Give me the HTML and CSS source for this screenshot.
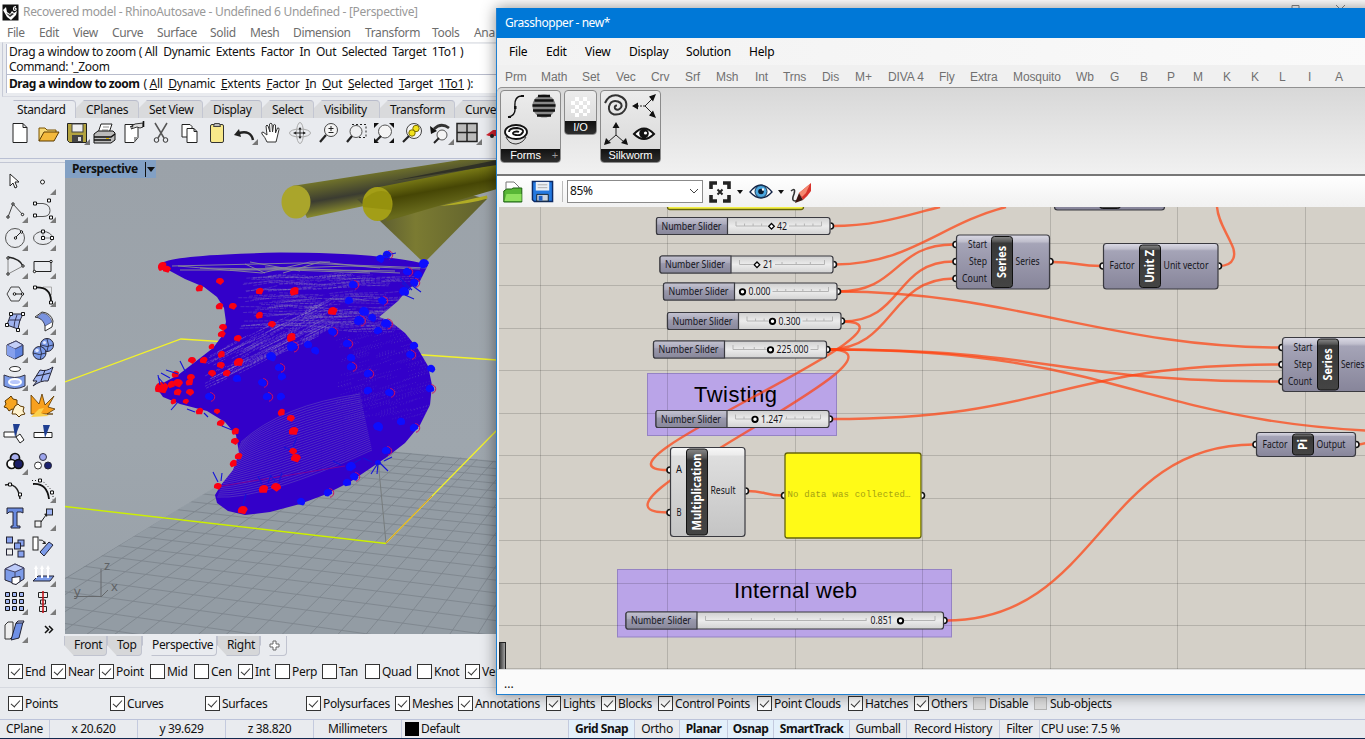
FILE: index.html
```html
<!DOCTYPE html>
<html lang="en">
<head>
<meta charset="utf-8">
<title>Rhino and Grasshopper</title>
<link rel="stylesheet" href="styles.css">
</head>
<body>
<div class="rhino">
  <header class="titlebar">
    <svg class="app-icon" width="17" height="17" viewBox="0 0 17 17"><rect width="16" height="16" x=".5" y=".5" fill="#111"/><path d="M1 6l3-3 1 5 3 2 2-3 2 2 3-2-1 4-5 5-4-3z" fill="#fff"/><path d="M4 9l4 4 4-3-2-1-2 2z" fill="#333"/><path d="M14 2.500q-2.500 0-2.500 2.500 0 1.500 1.300 1.500t1.300-1.200q0-1.100-1.200-1.100" fill="none" stroke="#fff" stroke-width="1.200"/></svg>
    <span>Recovered model - RhinoAutosave - Undefined 6 Undefined - [Perspective]</span>
    <svg class="win-buttons" width="60" height="9" viewBox="0 0 60 9"><path d="M1 9V5.500h7V9M45 5l4 4M54 5l-4 4" fill="none" stroke="#888"/></svg>
  </header>
  <nav class="menu"><span>File</span><span>Edit</span><span>View</span><span>Curve</span><span>Surface</span><span>Solid</span><span>Mesh</span><span>Dimension</span><span>Transform</span><span>Tools</span><span>Ana</span></nav>
  <section class="command">
    <div class="history"><p class="h1">Drag a window to zoom ( All&nbsp; Dynamic&nbsp; Extents&nbsp; Factor&nbsp; In&nbsp; Out&nbsp; Selected&nbsp; Target&nbsp; 1To1 )</p><p>Command: '_Zoom</p></div>
    <div class="prompt"><b>Drag a window to zoom</b> <span>( <u>A</u>ll&nbsp; <u>D</u>ynamic&nbsp; <u>E</u>xtents&nbsp; <u>F</u>actor&nbsp; <u>I</u>n&nbsp; <u>O</u>ut&nbsp; <u>S</u>elected&nbsp; <u>T</u>arget&nbsp; <u>1To1</u> ):</span></div>
  </section>
  <div class="tool-tabs"><span class="on">Standard</span><span>CPlanes</span><span>Set View</span><span>Display</span><span>Select</span><span>Visibility</span><span>Transform</span><span>Curve</span></div>
  <div class="toolbar">
    <svg viewBox="0 0 28 28"><path d="M7 4.500h10l4 4v15H7zM17 4.500v4h4" fill="#fff" stroke="#222"/></svg>
    <svg viewBox="0 0 28 28"><path d="M5 22V9h6l2 2h9v3" fill="#f7d978" stroke="#7a5200"/><path d="M5 22l5-9h15l-5 9z" fill="#f4b93c" stroke="#5a3a00"/></svg>
    <svg viewBox="0 0 28 28"><path d="M5.500 4.500h19v19h-17l-2-2z" fill="#b3a33f" stroke="#222"/><rect x="10" y="5" width="11" height="8" fill="#eee" stroke="#444"/><rect x="10" y="16" width="11" height="7" fill="#444"/><rect x="16" y="18" width="3" height="4" fill="#ddd"/><path d="M28 20v6h-6z" fill="#777"/></svg>
    <svg viewBox="0 0 28 28"><path d="M11 5h11l-3 9H8z" fill="#fff" stroke="#222"/><path d="M13 8h6m-7 3h6" stroke="#888"/><path d="M4 15l4-3h15l2 2v7l-4 3H4z" fill="#bbb" stroke="#111"/><path d="M4 18h17l4-3M4 21h17" stroke="#111" stroke-width="1.500" fill="none"/><rect x="16" y="19" width="3" height="1" fill="#e3b800"/></svg>
    <svg viewBox="0 0 28 28"><path d="M7 5.500h13v13l-4 5H7z" fill="#fff" stroke="#222"/><path d="M16 23v-5h4z" fill="#999"/><path d="M12 8l5-3 8-1v4l-3 1-3-1-6 2 2-3z" fill="#ddd" stroke="#333"/><path d="M25.500 2v6" stroke="#111" stroke-width="1.600"/></svg>
    <svg viewBox="0 0 28 28"><path d="M9 4l9 15M21 4l-9 15" stroke="#555" stroke-width="1.500"/><circle cx="10.500" cy="21" r="2.300" fill="none" stroke="#333"/><circle cx="19.500" cy="21" r="2.300" fill="none" stroke="#333"/></svg>
    <svg viewBox="0 0 28 28"><path d="M8 5.500h8l2 2V18H8z" fill="#fff" stroke="#222"/><path d="M13 9.500h7l3 3v11H13zM20 9.500v3h3" fill="#fff" stroke="#222"/></svg>
    <svg viewBox="0 0 28 28"><rect x="8.500" y="5.500" width="13" height="18" rx="1.500" fill="#f9e98a" stroke="#333"/><path d="M11.500 7.500l1-3h5l1 3z" fill="#bbb" stroke="#444"/></svg>
    <svg viewBox="0 0 28 28"><path d="M23 21q-2-10-14-7" fill="none" stroke="#222" stroke-width="2.500"/><path d="M4 16l5-6 2 8z" fill="#222"/><path d="M28 20v6h-6z" fill="#777"/></svg>
    <svg viewBox="0 0 28 28"><path d="M9 23q-2-5-5-8-1-2 1-2l4 3-1-9q1-2 2 0l2 6-.5-8q1.500-1.500 2.500 0l.5 8 1-7q1.500-1 2 0v8l2-5q2-.5 1.500 1.500L19 19l-1 4z" fill="#fff" stroke="#333"/></svg>
    <svg viewBox="0 0 28 28"><ellipse cx="14" cy="14" rx="10.500" ry="4" fill="none" stroke="#aaa"/><ellipse cx="14" cy="14" rx="3.500" ry="10.500" fill="none" stroke="#aaa"/><path d="M14 9v10M9 14h10" stroke="#222"/><path d="M14 8l1.500 2.500h-3zM14 20l1.500-2.500h-3zM20 14l-3-1.500v3zM7 14l3-1.500v3z" fill="#222"/></svg>
    <svg viewBox="0 0 28 28"><circle cx="17" cy="11" r="6.500" fill="#f4f4f4" stroke="#444"/><path d="M6 23l6-7" stroke="#222" stroke-width="2.200"/><path d="M17 7v5M14.500 9.500h5M14.500 13.500h5" stroke="#222"/></svg>
    <svg viewBox="0 0 28 28"><path d="M10 5.500h14v13H16" fill="none" stroke="#222" stroke-dasharray="2 2"/><circle cx="14" cy="12.500" r="6" fill="#f4f4f499" stroke="#555"/><path d="M5 23l5-6" stroke="#222" stroke-width="2.200"/></svg>
    <svg viewBox="0 0 28 28"><path d="M4 4h5l-5 5zM24 4v5l-5-5zM4 24v-5l5 5zM24 24h-5l5-5z" fill="#111"/><circle cx="15" cy="12.500" r="6.500" fill="#f4f4f4" stroke="#555"/><path d="M6 22l5-5" stroke="#222" stroke-width="2.200"/></svg>
    <svg viewBox="0 0 28 28"><circle cx="16" cy="12" r="7.500" fill="#f4f4f4" stroke="#444"/><path d="M5 23l6-6" stroke="#222" stroke-width="2.200"/><circle cx="18" cy="9.500" r="3.200" fill="#f2e21b" stroke="#7a6c00"/><circle cx="14" cy="14" r="3.200" fill="#f2e21b" stroke="#7a6c00"/></svg>
    <svg viewBox="0 0 28 28"><path d="M23 9q-8-6-15 1" fill="none" stroke="#333" stroke-width="2.800"/><path d="M4 7l1 8 6-3z" fill="#111"/><circle cx="16" cy="16" r="5" fill="#f4f4f4" stroke="#555"/><path d="M8 24l5-5" stroke="#222" stroke-width="2"/><path d="M28 20v6h-6z" fill="#777"/></svg>
    <svg viewBox="0 0 28 28"><path d="M3 4.500h20v18H3zM13 4.500v18M3 13.500h20" fill="#bbb" stroke="#222" stroke-width="1.500"/><path d="M28 20v6h-6z" fill="#777"/></svg>
    <svg viewBox="0 0 28 28"><path d="M4 16l3-2 4-3h12v6H7z" fill="#d2222e"/><circle cx="10" cy="17" r="2" fill="#222"/></svg>
  </div>
  <div class="work">
    <aside class="tools">
      <svg viewBox="0 0 29 28"><path d="M10 6v12l3-3 2 5 2-1-2-5h4z" fill="#fff" stroke="#222"/></svg>
      <svg viewBox="0 0 29 28"><circle cx="13.500" cy="14" r="2" fill="#fff" stroke="#222"/><path class="c" d="M27 21v6h-6z"/></svg>
      <svg viewBox="0 0 29 28"><path d="M8 21l5-13 10 11" fill="none" stroke="#444"/><circle class="p" cx="8" cy="21" r="1.200"/><circle class="p" cx="13" cy="8" r="1.200"/><circle class="p" cx="22.500" cy="18.500" r="1.200"/><path class="c" d="M28 21v6h-6z"/></svg>
      <svg viewBox="0 0 29 28"><path d="M6 7.500h8q7 1 7 7t-7 6H6" fill="none" stroke="#555"/><path class="p" d="M4.500 6h3v3h-3zM4.500 18h3v3h-3zM18.500 3h3v3h-3zM20.500 20h3v3h-3z"/><path class="c" d="M27 21v6h-6z"/></svg>
      <svg viewBox="0 0 29 28"><circle cx="15" cy="14" r="9.500" fill="none" stroke="#555"/><path d="M15 14l6-6" stroke="#222"/><circle class="p" cx="15.500" cy="14" r="1.200"/><circle class="p" cx="21.500" cy="8" r="1.200"/><path class="c" d="M28 21v6h-6z"/></svg>
      <svg viewBox="0 0 29 28"><ellipse cx="14" cy="14" rx="9.500" ry="6.500" fill="none" stroke="#555"/><path d="M14 14V8M14 14h9" stroke="#888"/><path class="p" d="M12.500 12.500h3v3h-3zM12.500 6h3v3h-3zM21.500 12.500h3v3h-3z"/><path class="c" d="M27 21v6h-6z"/></svg>
      <svg viewBox="0 0 29 28"><path d="M8 22V6M8 22l15-8" stroke="#888"/><path d="M8 5q12 2 15 9" fill="none" stroke="#222" stroke-width="1.300"/><circle class="p" cx="8" cy="6" r="1.200"/><circle class="p" cx="23" cy="14" r="1.200"/><circle class="p" cx="8" cy="22" r="1.200"/><path class="c" d="M28 21v6h-6z"/></svg>
      <svg viewBox="0 0 29 28"><path d="M5 9.500h17v10H5z" fill="none" stroke="#222"/><circle class="p" cx="22" cy="9.500" r="1.200"/><circle class="p" cx="5.500" cy="19.500" r="1.200"/><path class="c" d="M27 21v6h-6z"/></svg>
      <svg viewBox="0 0 29 28"><path d="M7 14l4-7h8l4 7-4 7h-8z" fill="none" stroke="#444"/><path d="M15 14h7" stroke="#222"/><circle class="p" cx="14.500" cy="14" r="1.300"/><circle class="p" cx="22.500" cy="14" r="1.200"/><path class="c" d="M28 21v6h-6z"/></svg>
      <svg viewBox="0 0 29 28"><path d="M14 7h8.500v8" fill="none" stroke="#aaa"/><path d="M6 7.500q16-1 16 14" fill="none" stroke="#111" stroke-width="1.800"/><path class="p" d="M4.500 6h3v3h-3zM20.500 21h3v3h-3z"/><path class="c" d="M27 21v6h-6z"/></svg>
      <svg viewBox="0 0 29 28"><path d="M11 6h12q-4 6-5 15l-11-4q2-6 4-11z" fill="#9fb2ee" stroke="#223"/><path d="M9 12h12M17 7q-3 7-3 12" fill="none" stroke="#335"/><path class="p" d="M9.500 4.500h3v3h-3zM21.500 4.500h3v3h-3zM5.500 15.500h3v3h-3zM16.500 20.500h3v3h-3z"/><path class="c" d="M28 21v6h-6z"/></svg>
      <svg viewBox="0 0 29 28"><path d="M6 9l7-5q9 1 11 9l-1 6-7 4V17q-2-7-10-8z" fill="#fff" stroke="#333"/><path d="M13 5q8 1 10 9l-7 4q-1-6-8-9z" fill="#7993e0" stroke="#334" stroke-width=".6"/><path class="c" d="M27 21v6h-6z"/></svg>
      <svg viewBox="0 0 29 28"><path d="M7 9l9-4 7 4v10l-8 4-8-4z" fill="#5f84e0" stroke="#223"/><path d="M7 9l9-4 7 4-8 4z" fill="#c3cff7" stroke="#446"/><path d="M7 9l8 4v10l-8-4z" fill="#86a0ec"/><path class="c" d="M28 21v6h-6z"/></svg>
      <svg viewBox="0 0 29 28"><circle cx="18" cy="9" r="6.500" fill="#7c9be8" stroke="#223"/><circle cx="10.500" cy="17" r="6.500" fill="#7c9be8" stroke="#223"/><path d="M4 17q6 3 13 0M11 11q3 6 0 13M12 9q6 3 12 0M18 3q3 6 0 12" stroke="#223" fill="none" stroke-width=".8"/><circle cx="8" cy="14.500" r="1.800" fill="#dfe6ff"/><circle cx="15.500" cy="6.500" r="1.600" fill="#dfe6ff"/><path class="c" d="M27 21v6h-6z"/></svg>
      <svg viewBox="0 0 29 28"><ellipse cx="15" cy="5" rx="5.500" ry="2.500" fill="#fff" stroke="#333"/><path d="M4 11q11 5 21 0v11q-10 5-21 0z" fill="#7c9be8" stroke="#334"/><ellipse cx="15" cy="18" rx="6" ry="3" fill="#b9c8fa" stroke="#fff" stroke-width="2"/><path class="c" d="M28 21v6h-6z"/></svg>
      <svg viewBox="0 0 29 28"><path d="M4 17l7-11q6 2 13-3l-5 14q-7-1-15 5l4-5z" fill="#9fb4f2" stroke="#223"/><path d="M7 12q7-1 14-3M16 6l-4 11" stroke="#223" fill="none"/><path class="c" d="M27 21v6h-6z"/></svg>
      <svg viewBox="0 0 29 28"><path d="M5 9l4-3 2-2 2 3 4 1v4l2 2-4 4-3-1-3 2-2-3-3-1 2-3z" fill="#f7a520" stroke="#5b3700"/><path d="M15 14l3-2 2 2 4 1-1 4 2 3-4 1-2 2-3-3-4 0 1-4z" fill="#fff3cf" stroke="#5b3700"/></svg>
      <svg viewBox="0 0 29 28"><path d="M2 3l8 9 3-10 3 11 9-9-6 11 7 2-8 5h6H2z" fill="#f8a01e" stroke="#5b3700" stroke-width=".8"/><path d="M2 25l8-8 5-1-3 5 8 3z" fill="#fbd04c"/></svg>
      <svg viewBox="0 0 29 28"><path d="M4 12h12v5H4zM16 17l4-3 4 6-4 3z" fill="#fff" stroke="#222"/><path d="M13 4h7l-5 13z" fill="#1f3f92"/></svg>
      <svg viewBox="0 0 29 28"><path d="M5 12.500h18v5H5z" fill="#fff" stroke="#222"/><path d="M14 5h7l-5 13z" fill="#1f3f92"/></svg>
      <svg viewBox="0 0 29 28"><g stroke="#111" stroke-width="1.700"><circle cx="15" cy="10" r="4.500" fill="#a9b0ee"/><circle cx="11.500" cy="16" r="4.500" fill="#fff"/><circle cx="18.500" cy="16" r="4.500" fill="#1c1f66"/></g><path class="c" d="M28 21v6h-6z"/></svg>
      <svg viewBox="0 0 29 28"><circle cx="14" cy="9" r="3.500" fill="#9da5ee" stroke="#334"/><circle cx="9" cy="17.500" r="3.500" fill="#fff" stroke="#333"/><circle cx="19" cy="17.500" r="3.500" fill="#1c2270" stroke="#223"/></svg>
      <svg viewBox="0 0 29 28"><path d="M5 9q13-3 15 14" fill="none" stroke="#222" stroke-width="1.500"/><path class="p" d="M8.500 7h3v3h-3zM18.500 17h3v3h-3z"/></svg>
      <svg viewBox="0 0 29 28"><path d="M4 8q14-1 16 15" fill="none" stroke="#111" stroke-width="1.800"/><path d="M3 4.500h10l11 11v8" fill="none" stroke="#222" stroke-dasharray="1 2"/><path class="p" d="M9.500 3h3v3h-3zM21.500 15h3v3h-3z"/><path class="c" d="M27 21v6h-6z"/></svg>
      <svg viewBox="0 0 29 28"><path d="M7 4h16v5l-2-1h-4v14h3v2h-9v-2h2V8H9l-2 2z" fill="#6a8be0" stroke="#223"/></svg>
      <svg viewBox="0 0 29 28"><path d="M12 18l5-7" stroke="#222"/><path d="M18.500 9l-.5 4-3-3z" fill="#222"/><rect x="6" y="17" width="6" height="6" fill="#f2f2f2" stroke="#222"/><rect x="17.500" y="5" width="6" height="6" fill="#9db2f2" stroke="#222"/><path class="c" d="M27 21v6h-6z"/></svg>
      <svg viewBox="0 0 29 28"><g fill="#88a2ee" stroke="#223"><rect x="6.500" y="5" width="6" height="6"/><rect x="18" y="8" width="6" height="6"/><rect x="14.500" y="11" width="6" height="6"/><rect x="18" y="19" width="6" height="6"/><rect x="6.500" y="17" width="6" height="6" fill="#eee"/></g></svg>
      <svg viewBox="0 0 29 28"><rect x="4" y="5" width="5" height="13" fill="#fff" stroke="#222"/><path d="M10 8q4-1 6 3" fill="none" stroke="#222"/><path d="M17 12h-4l3-3z" fill="#222"/><path d="M11 20l9-10 4 3-9 11z" fill="#7c9be8" stroke="#223"/></svg>
      <svg viewBox="0 0 29 28"><path d="M5 9l10-5 9 4v11l-8 5-11-4z" fill="#7c9be8" stroke="#223"/><path d="M5 9l10-5 9 4-9 4z" fill="#bccaf8" stroke="#446"/><path d="M15 12v6" stroke="#446"/><path d="M12 17.500l8-1v5l-4 3-4-1z" fill="#fff" stroke="#223"/><path class="c" d="M28 21v6h-6z"/></svg>
      <svg viewBox="0 0 29 28"><path d="M4 21l5-5h16l-4 5z" fill="#7c9be8" stroke="#223"/><path d="M7 18V8M13 18V8M19 18V8" stroke="#fff" stroke-width="2"/><path d="M5 9l2-4 2 4zM11 9l2-4 2 4zM17 9l2-4 2 4z" fill="#fff"/><path class="c" d="M27 21v6h-6z"/></svg>
      <svg viewBox="0 0 29 28"><path d="M5.500 4.500h4v4h-4zM12.500 4.500h4v4h-4zM19.500 4.500h4v4h-4zM5.500 11.500h4v4h-4zM12.500 11.500h4v4h-4zM19.500 11.500h4v4h-4zM5.500 18.500h4v4h-4zM12.500 18.500h4v4h-4zM19.500 18.500h4v4h-4z" fill="#9fb4f2" stroke="#111"/><path class="c" d="M28 21v6h-6z"/></svg>
      <svg viewBox="0 0 29 28"><path d="M9.500 4.500h9v5h-9zM11.500 12h5v4h-5zM10.500 18.500h7v5h-7z" fill="#eee" stroke="#222"/><path d="M14 3v22" stroke="#c3161c" stroke-width="1.600"/><path class="c" d="M27 21v6h-6z"/></svg>
      <svg viewBox="0 0 29 28"><path d="M5 9l3-3h5v14l-3 3H5z" fill="#eee" stroke="#333"/><path d="M16 7l7-1-4 16-8 2z" fill="#6f90e6" stroke="#223"/><path d="M16 7l2-2 6 0-1 2z" fill="#c6d2fa" stroke="#223"/><path class="c" d="M28 21v6h-6z"/></svg>
      <svg viewBox="0 0 29 28"><path d="M16 10l3.500 3.500L16 17M20 10l3.500 3.500L20 17" fill="none" stroke="#111" stroke-width="1.500"/></svg>
    </aside>
    <div class="viewport">
      <svg id="scene" width="432" height="474" viewBox="65 160 432 474">
        <defs>
          <linearGradient id="tube1" gradientUnits="userSpaceOnUse" x1="370" y1="172" x2="376" y2="207"><stop offset="0" stop-color="#74762a"/><stop offset=".55" stop-color="#3b3c31"/><stop offset="1" stop-color="#8d8f2c"/></linearGradient>
          <linearGradient id="tube2" gradientUnits="userSpaceOnUse" x1="440" y1="174" x2="446" y2="207"><stop offset="0" stop-color="#7a7b16"/><stop offset=".45" stop-color="#464605"/><stop offset="1" stop-color="#686a1c"/></linearGradient>
          <linearGradient id="cone"><stop offset="0" stop-color="#4a4b30"/><stop offset=".45" stop-color="#7b7b32"/><stop offset="1" stop-color="#60612d"/></linearGradient>
          <clipPath id="ground"><path d="M290 442L497 461V634H65V578z"/></clipPath>
          <clipPath id="hull"><path d="M159 265Q165 255 280 252.500Q390 253 428 265L420 281 407 290 398 301 385 312 379 317 390 321 405 333 418 349 428 366 432 385 430 405 420 425 405 443 387 457 350 482 324 495 300 504 270 512 245 515 228 511 217 503 215 495 221 485 233 470 239 453 236 435 225 422 207 411 180 404 163 397 158 390 163 383 178 375 195 362 213 348 222 336 226 322 224 308 217 297 204 287 185 279z"/></clipPath>
        </defs>
        <path d="M65 382L181 339L424 355L497 360" class="yellow"/>
        <g clip-path="url(#ground)"><rect x="65" y="440" width="432" height="194" fill="#939ca4"/><g id="floor"></g></g>
        <path d="M378 460L386 543" stroke="#777c7d"/>
        <path d="M65 506.500L386 543.500" stroke="#cdf000" stroke-width="1.400"/>
        <path d="M386 543L497 430" class="yellow"/>
        <path d="M386 543L432 496" stroke="#d8902a"/>
        <path d="M74 596.500h27V569M101 597l7-7" fill="none" stroke="#66696c"/>
        <text x="104" y="570" class="axis">z</text><text x="74" y="596" class="axis">y</text><text x="111" y="591" class="axis">x</text>
        <path d="M292 186L460 160H497V178L307 218z" fill="url(#tube1)"/>
        <ellipse cx="296" cy="202" rx="14.500" ry="16.500" fill="#aaa52b"/>
        <path d="M357 199Q420 180 487 199L424 263z" fill="url(#cone)"/>
        <path d="M374 188L497 164V189L387 221z" fill="url(#tube2)"/>
        <path d="M440 206L487 195.500 487.500 198.500Q470 204 440 206z" fill="#b0ac25"/>
        <path d="M392 181L497 160V165z" fill="#303126"/>
        <ellipse cx="377.500" cy="204" rx="15" ry="17" fill="#a39e17"/>
        <path d="M363 200Q380 185 391 195L392 210 363 207z" fill="#8a8606" opacity=".5"/>
        <g clip-path="url(#hull)"><rect x="150" y="245" width="300" height="280" fill="#3300c9"/><g id="mesh"></g></g>
        <g id="dots"></g>
      </svg>
      <div class="vp-label"><b>Perspective</b><i></i></div>
    </div>
  </div>
  <div class="vp-tabs"><span>Front</span><span>Top</span><span class="on">Perspective</span><span>Right</span><span class="on"><svg width="11" height="11" viewBox="0 0 11 11"><path d="M4 1h3v3h3v3H7v3H4V7H1V4h3z" fill="#fff" stroke="#666"/></svg></span></div>
  <div class="checks osnap"><label class="v">End</label><label class="v">Near</label><label class="v">Point</label><label>Mid</label><label>Cen</label><label class="v">Int</label><label>Perp</label><label>Tan</label><label>Quad</label><label>Knot</label><label class="v">Ver</label></div>
  <div class="checks filter"><label class="v">Points</label><label class="v">Curves</label><label class="v">Surfaces</label><label class="v">Polysurfaces</label><label class="v">Meshes</label><label class="v">Annotations</label><label class="v">Lights</label><label class="v">Blocks</label><label class="v">Control Points</label><label class="v">Point Clouds</label><label class="v">Hatches</label><label class="v">Others</label><label class="off">Disable</label><label class="off">Sub-objects</label></div>
  <footer class="status"><span>CPlane</span><span>x 20.620</span><span>y 39.629</span><span>z 38.820</span><span>Millimeters</span><span class="layer"><i></i>Default</span><b>Grid Snap</b><span>Ortho</span><b>Planar</b><b>Osnap</b><b>SmartTrack</b><span>Gumball</span><span>Record History</span><span>Filter</span><span class="cpu">CPU use: 7.5 %</span></footer>
</div>

<div class="gh">
  <header class="gh-title">Grasshopper - new*</header>
  <nav class="gh-menu"><span>File</span><span>Edit</span><span>View</span><span>Display</span><span>Solution</span><span>Help</span></nav>
  <nav class="gh-tabs"><span>Prm</span><span>Math</span><span>Set</span><span>Vec</span><span>Crv</span><span>Srf</span><span>Msh</span><span>Int</span><span>Trns</span><span>Dis</span><span>M+</span><span>DIVA 4</span><span>Fly</span><span>Extra</span><span>Mosquito</span><span>Wb</span><span>G</span><span>B</span><span>P</span><span>M</span><span>K</span><span>K</span><span>L</span><span>I</span><span>A</span></nav>
  <section class="ribbon">
    <div class="panel wide">
      <div class="icons">
        <svg viewBox="0 0 28 28"><path d="M6 25q8-1 7-10-1-11 7-11" fill="none" stroke="#111" stroke-width="1.400"/><path d="M6 24h3v2H6zM12 14h2.500v3H12zM19 3h3v2h-3z" fill="#111"/></svg>
        <svg viewBox="0 0 28 28"><circle cx="14" cy="14" r="11.500" fill="#888"/><path d="M8 4h12M4.500 8.500h19M2.500 13.500h23M3 18.500h22M7 23.500h14" stroke="#111" stroke-width="2.600"/></svg>
        <svg viewBox="0 0 28 28"><ellipse cx="14" cy="12" rx="11" ry="7" fill="#fff" stroke="#111" stroke-width="1.800"/><path d="M7 12q0-4 8-4 7 1 6 4-2 4-7 3-5-1-2-3 3-1 5 0" fill="none" stroke="#111" stroke-width="1.800"/><path d="M4 17q3 7 10 7 7-1 10-7" fill="none" stroke="#333"/></svg>
      </div>
      <div class="cap">Forms<i>+</i></div>
    </div>
    <div class="panel narrow">
      <div class="icons"><svg viewBox="0 0 28 28"><path d="M9 5h4v4H9zM17 5h4v4h-4zM5 9h4v4H5zM13 9h4v4h-4zM21 9h3v4h-3zM9 13h4v4H9zM17 13h4v4h-4zM5 17h4v4H5zM13 17h4v4h-4zM21 17h3v4h-3zM9 21h4v4H9zM17 21h4v3h-4z" fill="#fff"/></svg></div>
      <div class="cap">I/O</div>
    </div>
    <div class="panel wide">
      <div class="icons">
        <svg viewBox="0 0 28 28"><path d="M3 11q4-9 13-7.500 10 3 8 12-3 8-12 7-6-2-5-8 2-7 9-5 5 2 3 6-3 4-6 1-1-3 2-3" fill="none" stroke="#333" stroke-width="2"/></svg>
        <svg viewBox="0 0 28 28"><path d="M7 14h8" stroke="#222" stroke-dasharray="2 1"/><path d="M15 14l8-8M15 14l8 8" stroke="#222"/><path d="M2 14l6-3.500v7zM26 2l-7 2.500 4 5zM26 26l-7-2.500 4-5z" fill="#111"/></svg>
        <svg viewBox="0 0 28 28"><path d="M14 6v9M14 15l-8 7M14 15l8 7" stroke="#222"/><path d="M14 2l3.500 6h-7zM2 25l2-7 5 5zM26 25l-2-7-5 5z" fill="#111"/></svg>
        <svg viewBox="0 0 28 28"><path d="M4 14Q14 3 24 14Q14 24 4 14z" fill="#fff" stroke="#111" stroke-width="2"/><circle cx="14" cy="13.500" r="4.800" fill="#111"/><circle cx="15.500" cy="13" r="1.600" fill="#fff"/></svg>
      </div>
      <div class="cap">Silkworm</div>
    </div>
  </section>
  <div class="gh-tools">
    <svg class="t-open" viewBox="0 0 20 24"><path d="M3 10V2h8l5 5v4" fill="#fff" stroke="#777"/><path d="M.8 22V11l3-2h5l1-1h9v14z" fill="#58b636" stroke="#1d5e12"/><path d="M1.500 21l2-7h15v7z" fill="#8ee05e"/></svg>
    <svg class="t-save" viewBox="0 0 24 24"><path d="M1.500 1.500h21v21h-19l-2-2z" fill="#2479e0" stroke="#0b2a66" stroke-width="1.500"/><path d="M5 2h14v9H5z" fill="#e9eef5"/><path d="M7 5h10M7 8h10" stroke="#aaa"/><path d="M6 15h12v7H6z" fill="#c9d4e2" stroke="#123"/><rect x="8" y="16.500" width="4" height="5" fill="#1c5fc4"/></svg>
    <i class="sep"></i>
    <div class="combo"><span>85%</span><svg width="10" height="6" viewBox="0 0 10 6"><path d="M1 1l4 4 4-4" fill="none" stroke="#444"/></svg></div>
    <svg class="t-zoom" viewBox="0 0 24 24"><path d="M3 9V3H9M15 3h6V9M21 15v6H15M9 21H3V15" fill="none" stroke="#222" stroke-width="3.600"/><path d="M9.500 9.500l5 5M14.500 9.500l-5 5" stroke="#222" stroke-width="2"/></svg>
    <i class="drop"></i>
    <svg class="t-eye" viewBox="0 0 24 24"><path d="M1 12Q12-2 23 12Q12 24 1 12z" fill="#fff" stroke="#124" stroke-width="1.300"/><circle cx="12" cy="11.500" r="6" fill="#4ba7df" stroke="#135"/><circle cx="12" cy="11.500" r="2.800" fill="#0a1c30"/><circle cx="14" cy="9.500" r="1.200" fill="#fff"/></svg>
    <i class="drop"></i>
    <svg class="t-pen" viewBox="0 0 24 24"><path d="M1 11q5-4 3 3-3 7 1 7 3 0 5-4" fill="none" stroke="#333" stroke-width="1.600"/><path d="M9 13L21 3v8q-4 6-8 9z" fill="#d8332c"/><path d="M9 13L20 4l-4 9-4 4z" fill="#f4876f"/><path d="M9 13l4 7-8 3z" fill="#3b1512"/></svg>
  </div>
  <svg id="canvas" width="868" height="462" viewBox="497 207 868 462">
    <defs>
      <linearGradient id="gDark" x2="0" y2="1"><stop offset="0" stop-color="#dcdbe6"/><stop offset=".12" stop-color="#c0bfcd"/><stop offset=".16" stop-color="#a5a4b7"/><stop offset="1" stop-color="#87859a"/></linearGradient>
      <linearGradient id="gLabel" x2="0" y2="1"><stop offset="0" stop-color="#c4c3d0"/><stop offset=".38" stop-color="#acabbd"/><stop offset=".45" stop-color="#9a99ad"/><stop offset="1" stop-color="#88879a"/></linearGradient>
      <linearGradient id="gLight" x2="0" y2="1"><stop offset="0" stop-color="#f8f8f8"/><stop offset=".08" stop-color="#ececec"/><stop offset=".1" stop-color="#dedede"/><stop offset="1" stop-color="#c4c4c4"/></linearGradient>
      <linearGradient id="gTrack" x2="0" y2="1"><stop offset="0" stop-color="#cfcfcf"/><stop offset=".5" stop-color="#ececec"/><stop offset="1" stop-color="#d2d2d2"/></linearGradient>
      <linearGradient id="gCap" x2="0" y2="1"><stop offset="0" stop-color="#888"/><stop offset=".1" stop-color="#555"/><stop offset=".13" stop-color="#383838"/><stop offset="1" stop-color="#444"/></linearGradient>
      <linearGradient id="gCorner" x2="1" y2="0"><stop offset="0" stop-color="#333"/><stop offset="1" stop-color="#aaa"/></linearGradient>
    </defs>
    <rect x="497" y="207" width="868" height="462" fill="#d4d0c8"/>
    <path d="M498 207V669" stroke="#f4f4f4" stroke-width="2"/>
    <rect class="group" x="647.500" y="373.500" width="189" height="62"/>
    <rect class="group" x="617.500" y="569.500" width="334" height="67.500"/>
    <g id="grid"></g>
    <text class="scribble" x="694" y="402" textLength="83">Twisting</text>
    <text class="scribble" x="734" y="598" textLength="123">Internal web</text>
    <g class="wires">
      <path d="M832 226C880 226 910 214 940 207"/>
      <path d="M835 264.500C910 264 940 224 1006 207"/>
      <path d="M838 291.500C900 291.500 893 244.500 954 244.500"/>
      <path d="M838 291.500C1010 291.500 1110 347.500 1280 347.500"/>
      <path d="M842 321.500C904 321.500 894 261.500 954 261.500"/>
      <path d="M842 321.500C944 321.500 568 470 668 470"/>
      <path d="M828 349.500C895 349.500 888 278.500 954 278.500"/>
      <path d="M828 349.500C939 349.500 557 512.500 668 512.500"/>
      <path d="M828 349.500C1055 349.500 1055 381.500 1280 381.500"/>
      <path d="M828 349.500C1140 349.500 1140 433 1450 433"/>
      <path d="M831 419C1056 419 1056 364.500 1280 364.500"/>
      <path d="M747 491C765 491 765 495.500 783 495.500"/>
      <path d="M946 620.500C1100 620.500 1100 444.500 1254 444.500"/>
      <path d="M1052 262C1077 262 1077 266 1101 266"/>
      <path d="M1219 266C1235 266 1237 254 1231 243C1225 230 1218 220 1217 207"/>
      <path d="M1357 444.500C1362 444.500 1365 443 1370 442"/>
    </g>
    <g id="nodes"></g>
    <rect x="499.500" y="642.500" width="6" height="28" fill="url(#gCorner)" stroke="#222"/>
  </svg>
  <footer class="gh-status">...</footer>
</div>
<script src="scene.js"></script>
</body>
</html>
```

FILE: styles.css
```css
* { box-sizing: border-box; }
body { margin: 0; width: 1365px; height: 739px; overflow: hidden; position: relative; background: #e9ebef; font: 12px/16px "Noto Sans", "Open Sans", sans-serif; letter-spacing: -0.35px; color: #111; white-space: nowrap; }
p { margin: 0; }
svg { display: block; }

.rhino { display: flex; flex-direction: column; height: 739px; overflow: hidden; }
.titlebar { display: flex; align-items: center; height: 24px; padding-left: 2px; gap: 4px; background: #fff; color: #999; flex: none; }
.titlebar span { letter-spacing: -0.31px; }
.win-buttons { margin-left: auto; margin-right: 14px; align-self: flex-start; }
.menu { display: grid; grid-template-columns: 32px 34px 39px 45px 53px 40px 43px 72px 67px 42px 23px; padding-left: 7px; height: 18px; line-height: 18px; background: #fff; color: #6d6d6d; flex: none; }
.command { height: 55px; flex: none; padding: 1px 0 0 6px; margin-left: 2px; border-left: 1px solid #c6cad6; border-bottom: 1px solid #d8dae2; background: #e9ebef; border-top: 1px solid #e4e6ea; }
.history { height: 31px; background: #fff; border-left: 1px solid #b8bdd0; border-bottom: 1px solid #b8bccc; line-height: 15px; padding-left: 2px; margin-left: -3px; }
.prompt { height: 18px; line-height: 17px; background: #fff; border-left: 1px solid #b8bdd0; padding-left: 2px; margin-left: -3px; }
.prompt b { letter-spacing: -0.47px; margin-right: 1px; }
.prompt span { letter-spacing: -0.29px; }
.history .h1 { letter-spacing: -0.32px; }

.tool-tabs { display: grid; grid-template-columns: 70px 63px 64px 59px 52px 66px 75px 80px; padding: 3px 0 0 6px; height: 21px; flex: none; line-height: 17px; }
.tool-tabs span { padding-left: 10px; background: #d9dadc; border-top: 1px solid #b9bccb; border-right: 1px solid #c3c6d2; border-radius: 0 4px 0 0; clip-path: polygon(8px 0, 100% 0, 100% 100%, 0 100%, 0 8px); }
.tool-tabs .on { background: #e9ebef; padding-left: 11px; }
.toolbar { display: flex; height: 41px; padding: 1px 0 0 6px; flex: none; border-bottom: 1px solid #b9bfd3; }
.toolbar svg { width: 28px; height: 28px; flex: none; }

.work { display: flex; height: 475px; flex: none; }
.tools { width: 65px; flex: none; display: grid; grid-template-columns: 29px 29px; grid-auto-rows: 28px; margin-top: 3px; padding-top: 5px; border-top: 1px solid #c2c6d4; align-content: start; height: 490px; }
.tools svg { width: 29px; height: 28px; }
.tools .c { fill: #7b7b7b; }
.tools .p { fill: #fff; stroke: #111; }
.viewport { position: relative; width: 432px; height: 474px; margin-top: 1px; background: linear-gradient(#9ba2a9, #9ea6ad 60%, #98a0a8); flex: none; }
.vp-label { position: absolute; left: 0; top: 0; height: 18px; width: 91px; background: #82a0c4; display: flex; align-items: center; padding-left: 7px; }
.vp-label b { letter-spacing: -0.35px; width: 73px; }
.vp-label i { border-left: 1px solid #111; height: 15px; padding-left: 1px; display: flex; align-items: center; }
.vp-label i::after { content: ""; border: 4px solid transparent; border-top: 5px solid #111; border-bottom: 0; }
.yellow { fill: none; stroke: #f2f22a; stroke-width: 1.300; }
.axis { font: 13px "Noto Sans", sans-serif; fill: #5f6265; }

.vp-tabs { display: grid; grid-template-columns: 43px 35px 75px 43px 27px; padding: 2px 0 0 64px; height: 22px; flex: none; line-height: 18px; }
.vp-tabs span { background: #d6d7d9; border: 1px solid #c0c3cf; border-top: 0; border-radius: 0 0 4px 6px; padding-left: 9px; clip-path: polygon(0 0, 100% 0, 100% 100%, 10px 100%, 0 9px); }
.vp-tabs .on { background: #e9ebef; }
.vp-tabs .on svg { margin: 4px 0 0 -1px; }
.checks { display: grid; align-items: center; height: 32px; flex: none; padding-left: 8px; border-bottom: 1px solid #d6d9e0; }
.osnap { grid-template-columns: 43px 48px 51px 44px 44px 37px 47px 43px 52px 48px 60px; }
.filter { grid-template-columns: 102px 95px 101px 89px 63px 88px 55px 57px 99px 91px 66px 58px 61px 90px; height: 31px; border: 0; }
.checks label { position: relative; display: flex; align-items: center; gap: 2px; letter-spacing: -0.3px; }
.filter label { letter-spacing: -0.35px; }
.checks label::before { content: ""; width: 13px; height: 13px; border: 1px solid #333; background: #fff; flex: none; }
.checks label.v::after { content: ""; position: absolute; left: 3px; top: 4px; width: 8px; height: 4px; border: solid #333; border-width: 0 0 1.300px 1.300px; transform: rotate(-48deg); }
.checks label.off::before { width: 11px; height: 11px; margin: 0 1px; background: #dcdcdc; border-color: #b5b5b5; }
.status { display: grid; grid-template-columns: 50px 88px 88px 88px 88px 167px 66px 45px 48px 46px 76px 57px 93px 40px 1fr; height: 20px; line-height: 18px; border-top: 1px solid #bcc3da; border-bottom: 1px solid #12284e; text-align: center; flex: none; }
.status > * { border-right: 1px solid #c4cade; }
.status b { background: #e3f0fb; letter-spacing: -0.5px; }
.status .cpu { text-align: left; padding-left: 1px; border: 0; letter-spacing: -0.3px; }
.status .layer { display: flex; align-items: center; gap: 2px; padding-left: 3px; }
.layer i { width: 14px; height: 14px; background: #000; }

.gh { position: absolute; left: 496px; top: 8px; width: 881px; height: 687px; border-left: 1px solid #1f7fd0; border-bottom: 1px solid #1f7fd0; background: #f0f0f0; box-shadow: 0 0 14px rgba(0, 0, 0, .45); display: flex; flex-direction: column; }
.gh > * { flex: none; }
.gh-title { height: 30px; line-height: 30px; padding-left: 8px; background: #0078d7; color: #fff; letter-spacing: -0.45px; }
.gh-menu { display: grid; grid-template-columns: 37px 39px 44px 57px 63px 60px; height: 27px; line-height: 28px; padding-left: 12px; background: linear-gradient(90deg, #f2f2f2, #fafafa); color: #000; letter-spacing: -0.2px; }
.gh-tabs { display: grid; grid-template-columns: 36px 41px 34px 35px 34px 31px 39px 28px 39px 33px 33px 51px 31px 43px 63px 34px 30px 27px 26px 30px 28px 28px 29px 27px 20px; height: 22px; line-height: 24px; padding-left: 8px; color: #707070; font-family: "Liberation Sans", Arial, sans-serif; letter-spacing: -0.1px; background: #f0f0f0; }
.ribbon { display: flex; align-items: flex-start; gap: 3px; height: 89px; padding: 2px 0 0 3px; border-top: 1px solid #919191; border-bottom: 2px solid #777; background: linear-gradient(#d8d8d8, #f1f1f1); border-radius: 5px 0 0 0; }
.panel { border: 1px solid #8b8b8b; border-radius: 4px; background: linear-gradient(#ececec, #d6d6d6); overflow: hidden; }
.wide { width: 61px; height: 73px; }
.narrow { width: 33px; height: 45px; }
.icons { display: grid; grid-template-columns: 28px 28px; grid-auto-rows: 28px; height: 58px; padding: 1px 0 0 1px; }
.narrow .icons { height: 30px; }
.icons svg { width: 28px; height: 28px; }
.cap { height: 14px; background: linear-gradient(#111, #303030); color: #fff; font: 11px/13px "Liberation Sans", Arial, sans-serif; letter-spacing: -0.1px; text-align: center; position: relative; }
.cap i { position: absolute; right: 2px; font-style: normal; color: #999; }
.wide .cap:has(i) { padding-right: 10px; }
.gh-tools { display: flex; align-items: center; height: 31px; padding-left: 6px; background: linear-gradient(#fff, #f1f1f1); }
.t-open { width: 20px; height: 24px; }
.t-save { width: 23px; height: 23px; margin-left: 8px; }
.sep { width: 1px; height: 21px; background: #bbb; margin: 0 4px 0 8px; }
.combo { width: 136px; height: 23px; border: 1px solid #8b8b8b; background: #fff; display: flex; align-items: center; justify-content: space-between; padding: 0 3px 1px 2px; }
.t-zoom { width: 24px; height: 24px; margin-left: 5px; }
.drop { border: 3px solid transparent; border-top: 4px solid #111; border-bottom: 0; margin: 0 6px 0 5px; }
.t-eye { width: 24px; height: 24px; }
.t-pen { width: 24px; height: 24px; }
.gh-status { height: 25px; line-height: 28px; padding-left: 7px; background: #fafafa; border-top: 1px solid #e0e0e0; letter-spacing: 0; }

.group { fill: #baa4e8; stroke: #9583c4; }
.gridline { stroke: #000; stroke-opacity: .15; fill: none; }
.scribble { font: 22px "Liberation Sans", Arial, sans-serif; letter-spacing: 0; fill: #000; }
.wires { fill: none; stroke: #ff4210; stroke-opacity: .72; stroke-width: 2.400; }
.box { stroke: #3a3a40; stroke-width: 1.200; }
.node-text { font: 10px "Noto Sans", sans-serif; letter-spacing: 0; fill: #16161c; }
.cap-text { font: bold 12px "Noto Sans", sans-serif; letter-spacing: 0; fill: #fff; text-anchor: middle; }
.note { font: 9px "Liberation Mono", monospace; letter-spacing: 0; fill: #a3a112; }
.grip { fill: #fff; stroke: #111; stroke-width: 1.600; }
.tick { stroke: #b4b4b4; fill: none; }
.knob { fill: #fff; stroke: #000; stroke-width: 1.900; }
.knob.thin { stroke-width: 1.300; }
```

FILE: scene.js
```js
const NS = 'http://www.w3.org/2000/svg';
function add(parent, tag, attrs, text) {
  const el = document.createElementNS(NS, tag);
  for (const k in attrs) el.setAttribute(k, attrs[k]);
  if (text) el.textContent = text;
  parent.appendChild(el);
  return el;
}
const byId = id => document.getElementById(id);
let seed = 7;
const rnd = () => (seed = (seed * 16807) % 2147483647) / 2147483647;

/* Ground plane: two families of lines converging on their vanishing points */
const floor = byId('floor');
let d = '';
for (let i = -2; i < 36; i++) {
  const x = -330 + i * 31;
  d += `M791 130L${x + 60} 690`;
}
for (let n = 0; n < 30; n++) {
  const y = 130 + 1 / (0.003106 - n * 0.000063);
  if (y < 130 || y > 760) continue;
  const m = (y - 80) / 3990;
  d += `M65 ${y - 325 * m}L497 ${y + 107 * m}`;
}
add(floor, 'path', { d, fill: 'none', stroke: '#7e868d', 'stroke-width': .9 });

/* Mesh wires over the solid body */
const mesh = byId('mesh');
const strands = (path, stroke, opacity, dash) =>
  add(mesh, 'path', { d: path, fill: 'none', stroke, 'stroke-width': .5, opacity, 'stroke-dasharray': dash });
/* lower lobe: thin contours following the bottom edge */
d = '';
for (let i = 0; i < 30; i++) {
  const k = i / 29;
  d += `M${217 + k * 24} ${497 - k * 55}Q${262 + k * 20} ${500 - k * 95} ${372 - k * 12} ${450 - k * 56}`;
}
strands(d, '#8d86b5', .65, 'none');
/* waist: short broken lines rising to the right */
d = '';
for (let i = 0; i < 150; i++) {
  const x = 205 + rnd() * 110, y = 372 - (x - 205) * .45 + (rnd() - .5) * 34, l = 8 + rnd() * 24;
  d += `M${x} ${y}l${l} ${-l * .5}`;
}
strands(d, '#aaa4c4', .55, '3 1');
/* shoulder: near-horizontal broken lines */
d = '';
for (let i = 0; i < 230; i++) {
  const x = 238 + rnd() * 150, y = 276 + rnd() * 55, l = 12 + rnd() * 34;
  if (y > 345 - (x - 238) * .12) continue;
  d += `M${x} ${y}l${l} ${2 - rnd() * 6}`;
}
strands(d, '#a09ab8', .5, '4 1');
/* right flank: faint speckle */
d = '';
for (let i = 0; i < 170; i++) {
  const x = 335 + rnd() * 90, y = 335 + rnd() * 85, l = 6 + rnd() * 16;
  d += `M${x} ${y}l${l} ${-l * .3}`;
}
strands(d, '#8880c0', .4, '1 2');
d = 'M172 266L300 263 428 268M178 266L262 273 310 262 330 262M200 268L395 271M245 264L265 273M283 273L320 262 380 268M180 270L290 270 370 273M230 270L350 266 420 269M250 262L300 271M265 267L400 273';
add(mesh, 'path', { d, fill: 'none', stroke: '#8a8a98', 'stroke-width': .9 });
add(mesh, 'path', { d: 'M222 486L345 466', stroke: '#7a0098', 'stroke-width': 1 });

const red = [[163,267,5],[167,270,4],[200,289],[220,282],[260,292],[295,292,5],[233,307],[220,307],[223,328],[222,335],[260,316],[272,325],[333,312,5],[292,338,5],[238,339],[212,347,3],[192,361],[204,361],[222,355],[221,366],[239,363,5],[212,374],[227,374],[176,375],[191,378],[162,389,7],[172,385],[178,384,5],[190,383],[190,393],[178,393],[174,402,3],[186,402,3],[200,412],[217,412,3],[221,424],[236,432],[235,442],[239,457],[234,464],[218,487],[264,490,5],[276,488,5],[243,511,5],[282,413],[291,419],[294,432,5],[293,452],[296,459,5]];
const blue = [[424,264,5],[407,272],[418,275],[414,283],[404,292,5],[387,255],[380,259],[353,285],[349,301],[382,301],[364,312,5],[359,321,5],[372,318],[386,324,5],[378,331],[332,332],[308,345],[292,347,5],[315,351],[347,344],[414,346],[410,355],[351,358],[351,367],[271,357,5],[279,368],[282,377],[262,383],[237,379],[368,374],[431,369],[430,389],[368,391],[389,393],[401,422],[414,428],[378,427,5],[386,451],[351,467,5],[354,477],[347,483],[328,493],[301,502],[267,397],[281,397],[209,397],[378,463,3]];
const dots = byId('dots');
blue.forEach(([x, y, r = 4.2], i) => {
  if (i % 2) add(dots, 'path', { d: `M${x} ${y - r}A${r} ${r} 0 0 1 ${x + 1} ${y + r}`, transform: 'translate(1 0)', fill: 'none', stroke: '#d01060', 'stroke-width': 1 });
  add(dots, 'path', { d: `M${x - r} ${y}A${r} ${r} 0 1 1 ${x + r * .6} ${y + r * .8}L${x - r * .6} ${y + r * .6}z`, fill: '#0d0dff', transform: `rotate(${(i * 53) % 80 - 60} ${x} ${y})` });
});
red.forEach(([x, y, r = 3.9], i) => {
  add(dots, 'path', { d: `M${x - r} ${y + 1}A${r} ${r} 0 1 1 ${x + r} ${y - 1}L${x + r * .3} ${y + r * .7}z`, fill: '#fb0014', transform: `rotate(${(i * 37) % 60 - 40} ${x} ${y})` });
});
d = 'M378 463l-7 11M378 463l-1 11M380 463l8 8M372 462l-9-4M384 461l8-4M160 385l-2-10M164 384l-6-7M170 378l-9-5M178 374l-12-4M218 482l-5-10M221 481l1-8M243 505l3-11M400 278l12 12M410 284l11 8M405 295l9 4M402 283l8 7M382 256l14-3M384 252l8 9M262 484l-4-8M268 483l3-8M276 482l-6-7M279 482l3-9M293 447l4-10M290 450l-6-3M341 465l-8-4M354 463l7-4M178 402l-7 8M195 412l-8-3M204 413l4 4M232 430l-10-4M186 373l-6-12';
add(dots, 'path', { d, fill: 'none', stroke: '#1414d8', 'stroke-width': 1.1 });

/* Grasshopper canvas grid */
d = '';
for (let i = 0; i < 7; i++) d += `M${Math.floor(541 + i * 127.5) - .5} 207V669`;
for (let i = 0; i < 11; i++) d += `M499 ${Math.floor(243 + i * 42.5) + .5}H1365`;
add(byId('grid'), 'path', { d, class: 'gridline' });

const nodes = byId('nodes');
const grip = (x, y, side) => add(nodes, 'path', { class: 'grip', d: side === 'r' ? `M${x} ${y - 3}a3 3 0 0 1 0 6` : `M${x} ${y - 3}a3 3 0 0 0 0 6` });
const label = (x, y, w, s) => add(nodes, 'text', { class: 'node-text', x, y, textLength: w, lengthAdjust: 'spacingAndGlyphs' }, s);

function slider(x, y, w, value, knob, textX, textW, round, ticks) {
  const h = 17, split = x + 71;
  grip(x + w + .5, y + 8.5, 'r');
  add(nodes, 'rect', { class: 'box', x, y, width: w, height: h, rx: 2.5, fill: 'url(#gTrack)' });
  add(nodes, 'path', { class: 'box', d: `M${split} ${y}V${y + h}H${x + 2}q-2 0-2-2V${y + 2}q0-2 2-2z`, fill: 'url(#gLabel)' });
  const a = split + 8.5, b = x + w - 8.5, step = (b - a) / ticks;
  const from = Math.min(textX, knob) - 4, to = Math.max(textX + textW, knob) + 2;
  let t = (from > a ? `M${a} ${y + 8.5}H${from}` : '') + `M${to} ${y + 8.5}H${b}`;
  for (let i = 0; i <= ticks; i++) {
    const tx = a + i * step;
    if (tx < from || tx > to) t += `M${tx} ${y + (i % ticks ? 6 : 4)}V${y + 8.5}`;
  }
  add(nodes, 'path', { class: 'tick', d: t });
  if (round) add(nodes, 'circle', { class: 'knob', cx: knob, cy: y + 8.8, r: 2.7 });
  else add(nodes, 'path', { class: 'knob thin', d: `M${knob} ${y + 6}l2.800 2.800-2.800 2.800-2.800-2.800z` });
  label(x + 5, y + 12, 60, 'Number Slider');
  label(textX, y + 12, textW, value);
}
function node(x, y, w, h, capX, name, fill, inputs, outputs) {
  inputs.forEach(p => grip(x - .5, p[3], 'l'));
  outputs.forEach(p => grip(x + w + .5, p[3], 'r'));
  add(nodes, 'rect', { class: 'box', x, y, width: w, height: h, rx: 3, fill: `url(#${fill})` });
  add(nodes, 'rect', { x: capX, y: y + 1.5, width: 21, height: h - 3, rx: 3, fill: 'url(#gCap)', stroke: '#111' });
  if (name) {
    const cx = capX + 14.5, cy = y + h / 2;
    const t = add(nodes, 'text', { class: 'cap-text', transform: `translate(${cx} ${cy}) rotate(-90)` }, name[0]);
    t.setAttribute('textLength', name[1]);
    t.setAttribute('lengthAdjust', 'spacingAndGlyphs');
  }
  inputs.concat(outputs).forEach(p => label(p[0], p[3] + 3.3, p[1], p[2]));
}

slider(656.5, 217.5, 173.5, '42', 771.5, 777, 10, false, 10);
slider(660, 256, 173, '21', 757, 763, 10, false, 6);
slider(663.5, 283, 173.5, '0.000', 742.5, 748.5, 22, true, 10);
slider(667.5, 312.5, 173.5, '0.300', 772.5, 778.5, 22, true, 10);
slider(653.5, 341, 173, '225.000', 770.5, 776.5, 32, true, 8);
slider(656, 410.5, 173, '1.247', 755, 761, 22, true, 10);
slider(626, 612, 317.5, '0.851', 900.5, 870.5, 22, true, 10);

node(956.5, 235, 93, 54, 991.5, ['Series', 32], 'gDark', [[968, 19, 'Start', 244.5], [969, 18, 'Step', 261.5], [962, 25, 'Count', 278.5]], [[1015.5, 24, 'Series', 261.5]]);
node(1103.5, 243.5, 114.5, 45.5, 1139.5, ['Unit Z', 33], 'gDark', [[1109.5, 25, 'Factor', 266]], [[1163.5, 45, 'Unit vector', 266]]);
node(1282.5, 337.5, 93, 54, 1317.5, ['Series', 32], 'gDark', [[1293.5, 19, 'Start', 347.5], [1294, 18, 'Step', 364.5], [1288, 24, 'Count', 381.5]], [[1341, 23.5, 'Series', 364.5]]);
node(1256.5, 432.5, 99, 24, 1292.5, ['Pi', 11], 'gDark', [[1262.5, 25, 'Factor', 444.5]], [[1316.5, 29, 'Output', 444.5]]);
node(1054.5, 165, 110, 45, 1099.5, null, 'gDark', [], []);
node(670.5, 447.5, 74.5, 89, 686.5, ['Multiplication', 77], 'gLight', [[676, 6, 'A', 470], [676.5, 5, 'B', 512.5]], [[710.5, 25, 'Result', 491]]);

grip(784.5, 495.5, 'l');
grip(921.5, 495.5, 'r');
add(nodes, 'rect', { x: 785, y: 453, width: 136, height: 85, rx: 2.5, fill: '#fffa17', stroke: '#65640c', 'stroke-width': 1.3 });
add(nodes, 'rect', { x: 667.5, y: 190, width: 136, height: 19.5, rx: 2.5, fill: '#f3ef44', stroke: '#65640c', 'stroke-width': 1.3 });
add(nodes, 'text', { class: 'note', x: 787.5, y: 497, textLength: 123 }, 'No data was collected…');
```
